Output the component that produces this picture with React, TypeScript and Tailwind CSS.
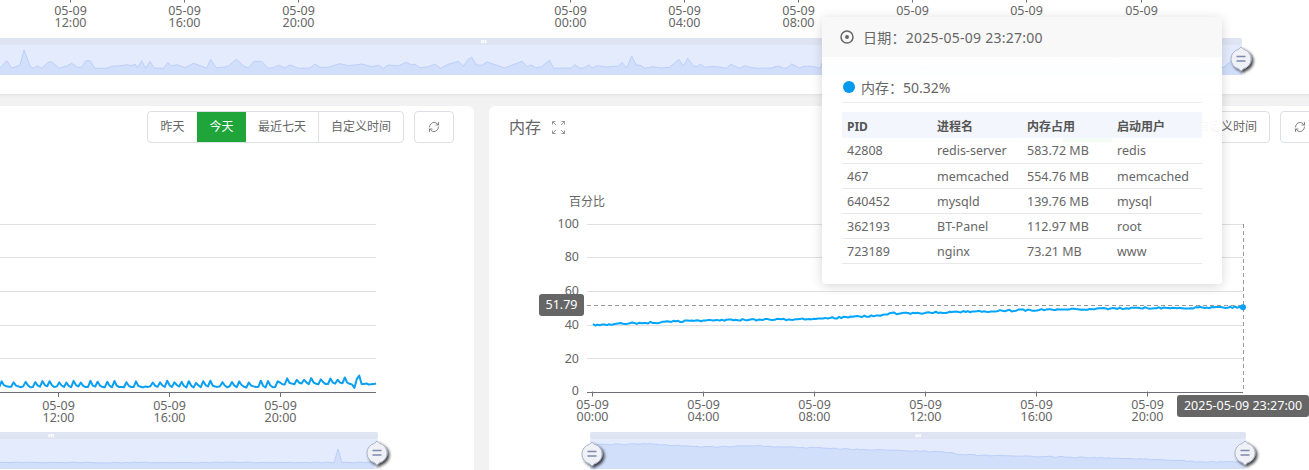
import { RefreshCw } from "lucide-react";

type Pt = [number, number];

function noise(seed: number) {
  let s = seed;
  return () => {
    s = (s * 16807) % 2147483647;
    return (s - 1) / 2147483646;
  };
}

const z1: Pt[] = [[0,205],[20,182],[35,205],[60,195],[72,150],[90,198],[100,205],[112,198],[125,205],[145,187],[155,185],[178,205],[200,198],[215,190],[232,202],[245,202],[258,182],[270,182],[285,205],[320,205],[335,199],[355,198],[380,194],[395,197],[405,192],[412,204],[425,182],[437,205],[450,184],[462,204],[490,205],[503,188],[515,198],[530,194],[555,203],[580,190],[600,197],[620,204],[632,178],[648,203],[670,202],[685,198],[710,178],[730,198],[745,204],[762,184],[785,184],[805,205],[820,203],[835,196],[855,203],[870,195],[895,205],[930,204],[945,192],[960,202],[985,202],[1020,191],[1045,197],[1065,195],[1085,192],[1115,200],[1135,196],[1150,205],[1165,195],[1195,198],[1218,187],[1235,195],[1245,193],[1260,203],[1285,200],[1305,192],[1322,205],[1345,193],[1375,184],[1390,198],[1405,178],[1415,172],[1430,195]];
const z10: Pt[] = [[575,196],[590,186],[610,193],[640,204],[660,196],[690,184],[705,200],[715,195],[730,203],[745,200],[768,181],[780,205],[830,204],[840,194],[855,205],[865,204],[880,195],[890,204],[905,197],[930,201],[965,198],[975,187],[988,204],[1002,168],[1015,194],[1030,197],[1040,205],[1062,200],[1085,204],[1110,202],[1137,178],[1150,198],[1162,175],[1178,197],[1190,200],[1197,192],[1212,202],[1230,199],[1245,200],[1272,205],[1285,193],[1310,205],[1325,197],[1340,202],[1360,205],[1400,204],[1420,198],[1435,205],[1445,204],[1458,192],[1480,204],[1495,199],[1515,199],[1540,205]];

const topPts: Pt[] = (() => {
  const r = noise(77);
  const pts: Pt[] = [[-378, 68]];
  for (let x = -370; x < 0; x += 7) pts.push([x, 62 + r() * 6]);
  z1.forEach(([x, y]) => pts.push([x / 3, y / 3]));
  z10.forEach(([x, y]) => pts.push([280 + x / 2.85, y / 3]));
  for (let x = 822; x < 1222; x += 7) pts.push([x, 62 + r() * 6]);
  pts.push([1223, 68], [1230, 62], [1242, 58]);
  return pts;
})();

function interp(anchors: Pt[], x: number) {
  for (let i = 1; i < anchors.length; i++) {
    if (x <= anchors[i][0]) {
      const [x0, y0] = anchors[i - 1];
      const [x1, y1] = anchors[i];
      return y0 + ((y1 - y0) * (x - x0)) / (x1 - x0);
    }
  }
  return anchors[anchors.length - 1][1];
}

const rightLine: Pt[] = (() => {
  const r = noise(911);
  const a: Pt[] = [[593, 325],[703, 320.5],[813, 319],[880, 315.5],[890, 313.5],[917, 313],[1033, 310],[1140, 308],[1243, 307.3]];
  const pts: Pt[] = [];
  for (let x = 593; x < 1243; x += 2.3) pts.push([x, interp(a, x) + (r() - 0.5) * 1.8]);
  pts.push([1243, 307.4]);
  return pts;
})();

const rightArea: Pt[] = (() => {
  const r = noise(321);
  const a: Pt[] = [[590, 445],[647, 444],[700, 447],[757, 446],[813, 448],[880, 450],[943, 452],[967, 455],[1067, 457],[1167, 460],[1200, 462],[1246, 462]];
  const pts: Pt[] = [];
  for (let x = 590; x <= 1246; x += 3) pts.push([x, interp(a, x) + (r() - 0.5) * 1.2]);
  return pts;
})();

const leftLine: Pt[] = (() => {
  const r = noise(4242);
  const pts: Pt[] = [];
  let since = 0;
  for (let x = -20; x < 376; x += 2.4) {
    const base = x < 278 ? 387.5 : 384.5;
    since++;
    if (since >= 3 && r() > 0.45) {
      since = 0;
      pts.push([x, base - 4.5 - r() * 2.5]);
    } else if (since === 1) {
      pts.push([x, base - 1.5 - r()]);
    } else {
      pts.push([x, base - r() * 1.2]);
    }
  }
  return pts.map(([x, y]): Pt => {
    if (Math.abs(x - 359) < 1.3) return [x, 375.5];
    if (Math.abs(x - 355) < 1.3) return [x, 388];
    return [x, y];
  });
})();

const leftArea: Pt[] = (() => {
  const r = noise(55);
  const pts: Pt[] = [];
  for (let x = -378; x < 378; x += 4) {
    let y = 463 - r() * 0.9;
    if (Math.abs(x - 337) < 3) y = 444 + Math.abs(x - 337) * 5;
    pts.push([x, y]);
  }
  return pts;
})();

const toPoly = (p: Pt[]) => p.map(([x, y]) => `${x.toFixed(1)},${y.toFixed(1)}`).join(" ");
const toArea = (p: Pt[], bottom: number) =>
  `${p[0][0].toFixed(1)},${bottom} ${toPoly(p)} ${p[p.length - 1][0].toFixed(1)},${bottom}`;

function Defs({ id }: { id: string }) {
  return (
    <defs>
      <filter id={id} x="-60%" y="-60%" width="220%" height="220%">
        <feDropShadow dx="2" dy="2" stdDeviation="1.5" floodColor="#000" floodOpacity="0.75" />
      </filter>
    </defs>
  );
}

function Handle({ cx, cy, f }: { cx: number; cy: number; f: string }) {
  return (
    <g filter={`url(#${f})`}>
      <path
        d={`M${cx} ${cy - 12} L${cx + 2.5} ${cy - 9.7} A10 10 0 0 1 ${cx + 2.5} ${cy + 9.7} L${cx} ${cy + 12} L${cx - 2.5} ${cy + 9.7} A10 10 0 0 1 ${cx - 2.5} ${cy - 9.7} Z`}
        fill="#eff1f6"
        stroke="#aab4c8"
      />
      <path d={`M${cx - 4.5} ${cy - 2.5} H${cx + 4.5} M${cx - 4.5} ${cy + 2} H${cx + 4.5}`} stroke="#7d8cab" strokeWidth="1.6" />
    </g>
  );
}

function Slider({
  x0,
  x1,
  y,
  pts,
  grip,
  left,
  f,
}: {
  x0: number;
  x1: number;
  y: number;
  pts: Pt[];
  grip: number;
  left?: boolean;
  f: string;
}) {
  return (
    <g>
      <rect x={x0} y={y} width={x1 - x0} height={7} rx={2} fill="#dfe4f2" />
      <rect x={x0} y={y + 7} width={x1 - x0} height={30} fill="#e3ebfd" />
      <polygon points={toArea(pts, y + 37)} fill="#d2dffa" />
      <polyline points={toPoly(pts)} fill="none" stroke="#bccffa" strokeWidth="1" />
      <rect x={grip - 2.5} y={y + 2} width={1.3} height={3.2} fill="#fff" />
      <rect x={grip - 0.5} y={y + 2} width={1.3} height={3.2} fill="#fff" />
      <rect x={grip + 1.5} y={y + 2} width={1.3} height={3.2} fill="#fff" />
      {left && <Handle cx={x0 + 2} cy={y + 22} f={f} />}
      <Handle cx={x1 - 1} cy={y + 21} f={f} />
    </g>
  );
}

function TimeLabel({ x, y, time }: { x: number; y: number; time: string }) {
  return (
    <g>
      <line x1={x} x2={x} y1={y - 13} y2={y - 8} stroke="#6e7079" />
      <text x={x} y={y} textAnchor="middle" dominantBaseline="central" className="fill-[#666] text-[12.5px]">
        05-09
      </text>
      <text x={x} y={y + 12} textAnchor="middle" dominantBaseline="central" className="fill-[#666] text-[12.5px]">
        {time}
      </text>
    </g>
  );
}

const gridYs = [224.5, 257.5, 291.5, 325.5, 358.5];

function TopChart() {
  const ticks: [number, string][] = [
    [70.5, "12:00"],
    [184.5, "16:00"],
    [298.5, "20:00"],
    [570.5, "00:00"],
    [684.5, "04:00"],
    [798.5, "08:00"],
    [912.5, "12:00"],
    [1026.5, "16:00"],
    [1141.5, "20:00"],
  ];
  return (
    <svg viewBox="-378 0 1718 94" width={1718} height={94} className="block">
      <Defs id="hs-top" />
      {ticks.map(([x, t]) => (
        <TimeLabel key={x} x={x} y={10.5} time={t} />
      ))}
      <Slider x0={-378} x1={1242} y={38} pts={topPts} grip={483.5} f="hs-top" />
    </svg>
  );
}

function LeftChart() {
  return (
    <svg viewBox="-378 143 852 330" width={852} height={330} className="block -mx-5">
      <Defs id="hs-left" />
      {gridYs.map((y) => (
        <line key={y} x1={-378} x2={376} y1={y} y2={y} stroke="#e0e0e0" />
      ))}
      <line x1={-378} x2={376} y1={392.5} y2={392.5} stroke="#6e7079" />
      {([[58.5, "12:00"], [169.5, "16:00"], [280.5, "20:00"]] as [number, string][]).map(([x, t]) => (
        <TimeLabel key={x} x={x} y={405} time={t} />
      ))}
      <polyline points={toPoly(leftLine)} fill="none" stroke="#0a9ff0" strokeWidth="2" strokeLinejoin="round" />
      <Slider x0={-378} x1={378} y={432} pts={leftArea} grip={51} f="hs-left" />
    </svg>
  );
}

function RightChart() {
  const yLabels: [number, string][] = [
    [223, "100"],
    [256.5, "80"],
    [290.5, "60"],
    [324, "40"],
    [358, "20"],
    [390.5, "0"],
  ];
  return (
    <svg viewBox="489 143 851 330" width={851} height={330} className="block -mx-5">
      <Defs id="hs-right" />
      <text x={587} y={201.5} textAnchor="middle" dominantBaseline="central" className="fill-[#666] text-xs">
        百分比
      </text>
      {gridYs.map((y) => (
        <line key={y} x1={587} x2={1243} y1={y} y2={y} stroke="#e0e0e0" />
      ))}
      <line x1={587} x2={1243} y1={392.5} y2={392.5} stroke="#6e7079" />
      {yLabels.map(([y, t]) => (
        <text key={t} x={579} y={y} textAnchor="end" dominantBaseline="central" className="fill-[#666] text-[12.5px]">
          {t}
        </text>
      ))}
      {([[592.5, "00:00"], [703.5, "04:00"], [814.5, "08:00"], [925.5, "12:00"], [1036.5, "16:00"], [1147.5, "20:00"]] as [number, string][]).map(([x, t]) => (
        <TimeLabel key={x} x={x} y={404.5} time={t} />
      ))}
      <polyline points={toPoly(rightLine)} fill="none" stroke="#00a5ff" strokeWidth="2" strokeLinejoin="round" />
      <line x1={587} x2={1243} y1={305.5} y2={305.5} stroke="#9a9a9a" strokeDasharray="4 3" />
      <line x1={1243.5} x2={1243.5} y1={224} y2={392} stroke="#9a9a9a" strokeDasharray="4 3" />
      <circle cx={1243} cy={307.3} r={3} fill="#0a9ff0" />
      <rect x={539} y={294} width={45} height={22} rx={3} fill="#666" />
      <text x={561.5} y={304.5} textAnchor="middle" dominantBaseline="central" className="fill-white text-[12.5px]">
        51.79
      </text>
      <rect x={1177} y={395} width={132} height={22} rx={3} fill="#666" />
      <text x={1243} y={405.5} textAnchor="middle" dominantBaseline="central" className="fill-white text-[12.5px]">
        2025-05-09 23:27:00
      </text>
      <Slider x0={590} x1={1246} y={432} pts={rightArea} grip={918} left f="hs-right" />
    </svg>
  );
}

function ExpandIcon() {
  return (
    <svg viewBox="0 0 13 13" width={13} height={13} fill="none" stroke="#999" strokeWidth="1" className="ml-[11px]">
      <path d="M0.5 3.5V0.5H3.5M0.5 0.5L4 4" />
      <path d="M9.5 0.5H12.5V3.5M12.5 0.5L9 4" />
      <path d="M0.5 9.5V12.5H3.5M0.5 12.5L4 9" />
      <path d="M9.5 12.5H12.5V9.5M12.5 12.5L9 9" />
    </svg>
  );
}

function CardHeader({ title, expand }: { title?: string; expand?: boolean }) {
  const btn = "flex items-center justify-center h-full text-xs text-[#666] border-l border-[#dcdfe6] first:border-l-0";
  return (
    <div className="flex items-center justify-between h-8">
      <div className="flex items-center">
        {title && <span className="text-base text-[#666]">{title}</span>}
        {expand && <ExpandIcon />}
      </div>
      <div className="flex items-center gap-[10px]">
        <div className="flex h-8 rounded border border-[#dcdfe6] overflow-hidden bg-white">
          <div className={`${btn} w-[49px]`}>昨天</div>
          <div className="flex items-center justify-center h-full w-[49px] text-xs text-white bg-[#20a53a]">今天</div>
          <div className={`${btn} w-[72px] border-l-0`}>最近七天</div>
          <div className={`${btn} w-[85px]`}>自定义时间</div>
        </div>
        <div className="flex items-center justify-center h-8 w-10 rounded border border-[#dcdfe6] bg-white">
          <RefreshCw size={12} color="#666" strokeWidth={1.6} />
        </div>
      </div>
    </div>
  );
}

const rows = [
  ["42808", "redis-server", "583.72 MB", "redis"],
  ["467", "memcached", "554.76 MB", "memcached"],
  ["640452", "mysqld", "139.76 MB", "mysql"],
  ["362193", "BT-Panel", "112.97 MB", "root"],
  ["723189", "nginx", "73.21 MB", "www"],
];

function Tooltip() {
  return (
    <div className="absolute left-[822px] top-[17px] z-10 w-[400px] rounded bg-white/95 shadow-[0_2px_12px_rgba(0,0,0,0.16)] overflow-hidden text-[#666]">
      <div className="flex items-center h-[40px] bg-[#f8f8f8] pl-[18px] text-[14px] tracking-[0.25px]">
        <svg viewBox="0 0 14 14" width={14} height={14} fill="none" className="mr-[9px]">
          <circle cx="7" cy="7" r="6" stroke="#666" strokeWidth="1.5" />
          <circle cx="7" cy="7" r="2" fill="#666" />
        </svg>
        <span>日期：2025-05-09 23:27:00</span>
      </div>
      <div className="px-5 pb-5">
        <div className="flex items-center h-[47px] mt-[-1px] border-b border-[#eee] text-[14px] pt-[16px]">
          <span className="ml-[1px] mr-[6px] h-3 w-3 rounded-full bg-[#0099ee]" />
          <span>内存：50.32%</span>
        </div>
        <table className="mt-[9px] w-[360px] table-fixed border-collapse text-[12.5px]">
          <thead>
            <tr className="h-[26px] bg-[#f3f6fc]">
              {["PID", "进程名", "内存占用", "启动用户"].map((h) => (
                <th key={h} className="pl-[5px] pt-[3px] pb-0 text-left text-xs font-bold text-[#555]">
                  {h}
                </th>
              ))}
            </tr>
          </thead>
          <tbody>
            {rows.map((r) => (
              <tr key={r[0]} className="h-[25px] border-b border-[#e8e8e8]">
                {r.map((c, i) => (
                  <td key={i} className="pl-[5px] pt-[3px] pb-0">
                    {c}
                  </td>
                ))}
              </tr>
            ))}
          </tbody>
        </table>
      </div>
    </div>
  );
}

export default function App() {
  return (
    <div className="relative w-[1309px] h-[470px] overflow-hidden bg-[#f2f2f2] font-['Noto_Sans','Noto_Sans_CJK_SC',sans-serif]">
      <div className="w-[1718px] ml-[-378px]">
        <div className="h-[94px] bg-white shadow-[0_1px_3px_rgba(0,0,0,0.08)]">
          <TopChart />
        </div>
        <div className="flex gap-[15px] mt-3">
          <div className="w-[852px] h-[380px] rounded-md bg-white px-5 pt-[5px]">
            <CardHeader />
            <LeftChart />
          </div>
          <div className="w-[851px] h-[380px] rounded-md bg-white px-5 pt-[5px]">
            <CardHeader title="内存" expand />
            <RightChart />
          </div>
        </div>
      </div>
      <Tooltip />
    </div>
  );
}
